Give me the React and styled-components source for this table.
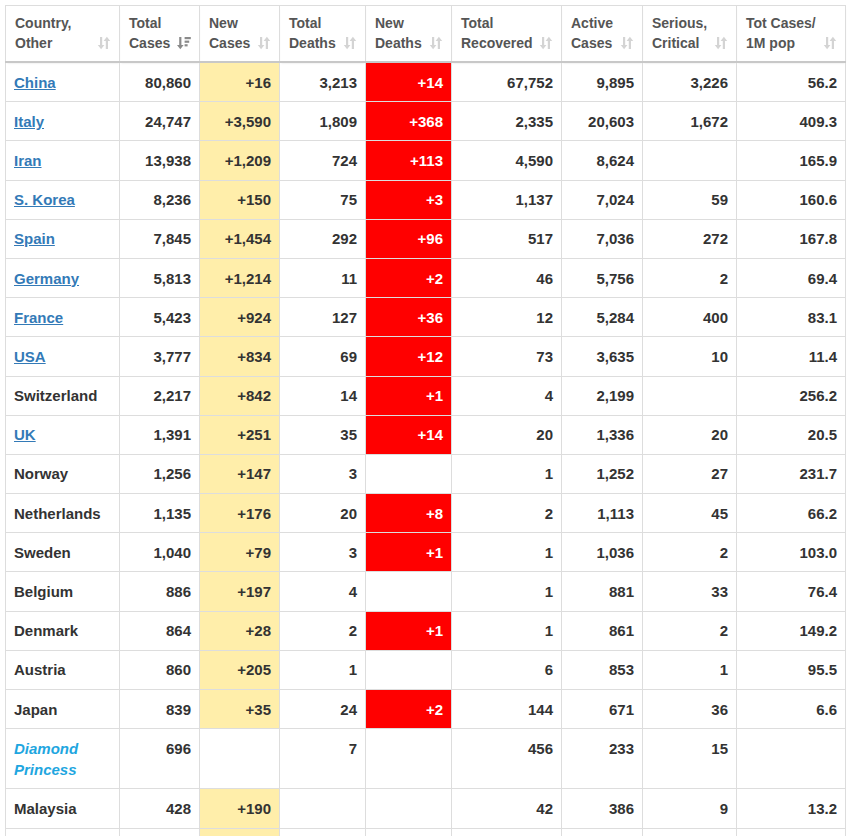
import React from "react";
import styled, { createGlobalStyle } from "styled-components";

const GlobalStyle = createGlobalStyle`
  body {
    margin: 0;
    background: #fff;
    font-family: "Liberation Sans", Arial, sans-serif;
  }
`;

// colonnes : largeur + titre
const columns = [
  { key: "country", title: ["Country,", "Other"], width: 114 },
  { key: "total", title: ["Total", "Cases"], width: 80, active: true },
  { key: "newCases", title: ["New", "Cases"], width: 80 },
  { key: "deaths", title: ["Total", "Deaths"], width: 86 },
  { key: "newDeaths", title: ["New", "Deaths"], width: 86 },
  { key: "recovered", title: ["Total", "Recovered"], width: 110 },
  { key: "active", title: ["Active", "Cases"], width: 81 },
  { key: "serious", title: ["Serious,", "Critical"], width: 94 },
  { key: "perMillion", title: ["Tot Cases/", "1M pop"], width: 109 },
];

const rows = [
  ["China", "80,860", "+16", "3,213", "+14", "67,752", "9,895", "3,226", "56.2", "link"],
  ["Italy", "24,747", "+3,590", "1,809", "+368", "2,335", "20,603", "1,672", "409.3", "link"],
  ["Iran", "13,938", "+1,209", "724", "+113", "4,590", "8,624", "", "165.9", "link"],
  ["S. Korea", "8,236", "+150", "75", "+3", "1,137", "7,024", "59", "160.6", "link"],
  ["Spain", "7,845", "+1,454", "292", "+96", "517", "7,036", "272", "167.8", "link"],
  ["Germany", "5,813", "+1,214", "11", "+2", "46", "5,756", "2", "69.4", "link"],
  ["France", "5,423", "+924", "127", "+36", "12", "5,284", "400", "83.1", "link"],
  ["USA", "3,777", "+834", "69", "+12", "73", "3,635", "10", "11.4", "link"],
  ["Switzerland", "2,217", "+842", "14", "+1", "4", "2,199", "", "256.2"],
  ["UK", "1,391", "+251", "35", "+14", "20", "1,336", "20", "20.5", "link"],
  ["Norway", "1,256", "+147", "3", "", "1", "1,252", "27", "231.7"],
  ["Netherlands", "1,135", "+176", "20", "+8", "2", "1,113", "45", "66.2"],
  ["Sweden", "1,040", "+79", "3", "+1", "1", "1,036", "2", "103.0"],
  ["Belgium", "886", "+197", "4", "", "1", "881", "33", "76.4"],
  ["Denmark", "864", "+28", "2", "+1", "1", "861", "2", "149.2"],
  ["Austria", "860", "+205", "1", "", "6", "853", "1", "95.5"],
  ["Japan", "839", "+35", "24", "+2", "144", "671", "36", "6.6"],
  ["Diamond Princess", "696", "", "7", "", "456", "233", "15", "", "ship"],
  ["Malaysia", "428", "+190", "", "", "42", "386", "9", "13.2"],
  // ligne suivante, coupée par le bas de la fenêtre
  ["", "", "", "", "", "", "", "", "", "tail"],
];

const SortBoth = () => (
  <svg width="14" height="14" viewBox="0 0 14 14">
    <path d="M3 1h2.2v8H7.4L4.1 13.2 0.8 9H3z" fill="currentColor" />
    <path d="M8.8 13h2.2V5h2.2L9.9 0.8 6.6 5h2.2z" fill="currentColor" />
  </svg>
);

const SortDesc = () => (
  <svg width="14" height="14" viewBox="0 0 14 14">
    <path d="M2.2 1h2.2v8h2.2L3.3 13.2 0 9h2.2z" fill="currentColor" />
    <rect x="7.6" y="1" width="6.2" height="2.2" fill="currentColor" />
    <rect x="7.6" y="4.6" width="4.6" height="2.2" fill="currentColor" />
    <rect x="7.6" y="8.2" width="3" height="2.2" fill="currentColor" />
  </svg>
);

const App = () => {
  return (
    <Page>
      <GlobalStyle />
      <Table>
        <colgroup>
          {columns.map((c) => (
            <col key={c.key} style={{ width: c.width }} />
          ))}
        </colgroup>
        <thead>
          <tr>
            {columns.map((c) => (
              <HeadCell key={c.key}>
                <HeadInner>
                  <span>
                    {c.title[0]}
                    <br />
                    {c.title[1]}
                  </span>
                  <SortIcon active={c.active}>{c.active ? <SortDesc /> : <SortBoth />}</SortIcon>
                </HeadInner>
              </HeadCell>
            ))}
          </tr>
        </thead>
        <tbody>
          {rows.map((r, i) => {
            const kind = r[9];
            return (
              <tr key={r[0] || i}>
                <Cell>
                  {kind === "link" && <CountryLink href="#">{r[0]}</CountryLink>}
                  {kind === "ship" && <Ship>Diamond<br />Princess</Ship>}
                  {(!kind || kind === "tail") && r[0]}
                </Cell>
                <Num>{r[1]}</Num>
                <Num tone={r[2] || kind === "tail" ? "new" : undefined}>{r[2]}</Num>
                <Num>{r[3]}</Num>
                <Num tone={r[4] ? "death" : undefined}>{r[4]}</Num>
                <Num>{r[5]}</Num>
                <Num>{r[6]}</Num>
                <Num>{r[7]}</Num>
                <Num>{r[8]}</Num>
              </tr>
            );
          })}
        </tbody>
      </Table>
    </Page>
  );
};

const Page = styled.div`
  padding: 5px 6px 0 5px;
`;

const Table = styled.table`
  width: 840px;
  table-layout: fixed;
  border-collapse: collapse;
  border: 1px solid #ddd;
  font-size: 15px;
  font-weight: 700;
  color: #333;
`;

const HeadCell = styled.th`
  padding: 7px 8px 8px 9px;
  border: 1px solid #ddd;
  border-bottom: 2px solid #c8c8c8;
  box-shadow: 0 2px 2px -1px rgba(0, 0, 0, 0.12);
  text-align: left;
  vertical-align: bottom;
  font-size: 14px;
  line-height: 20px;
  font-weight: 700;
  color: #555;
`;

const HeadInner = styled.div`
  display: flex;
  justify-content: space-between;
  align-items: flex-end;
`;

const SortIcon = styled.span`
  display: flex;
  margin-bottom: 3px;
  color: ${(props) => (props.active ? "#8a8a8a" : "#d4d4d4")};
`;

const Cell = styled.td`
  padding: 8.6px 8px;
  border: 1px solid #ddd;
  line-height: 21px;
  vertical-align: top;
  text-align: left;
  white-space: nowrap;
`;

const Num = styled(Cell)`
  text-align: right;
  background: ${(props) =>
    props.tone === "new" ? "#ffeeaa" : props.tone === "death" ? "#ff0000" : "transparent"};
  color: ${(props) => (props.tone === "death" ? "#fff" : "#333")};
`;

const CountryLink = styled.a`
  color: #337ab7;
  text-decoration: underline;
`;

const Ship = styled.span`
  color: #1ea6e0;
  font-style: italic;
`;

export default App;
